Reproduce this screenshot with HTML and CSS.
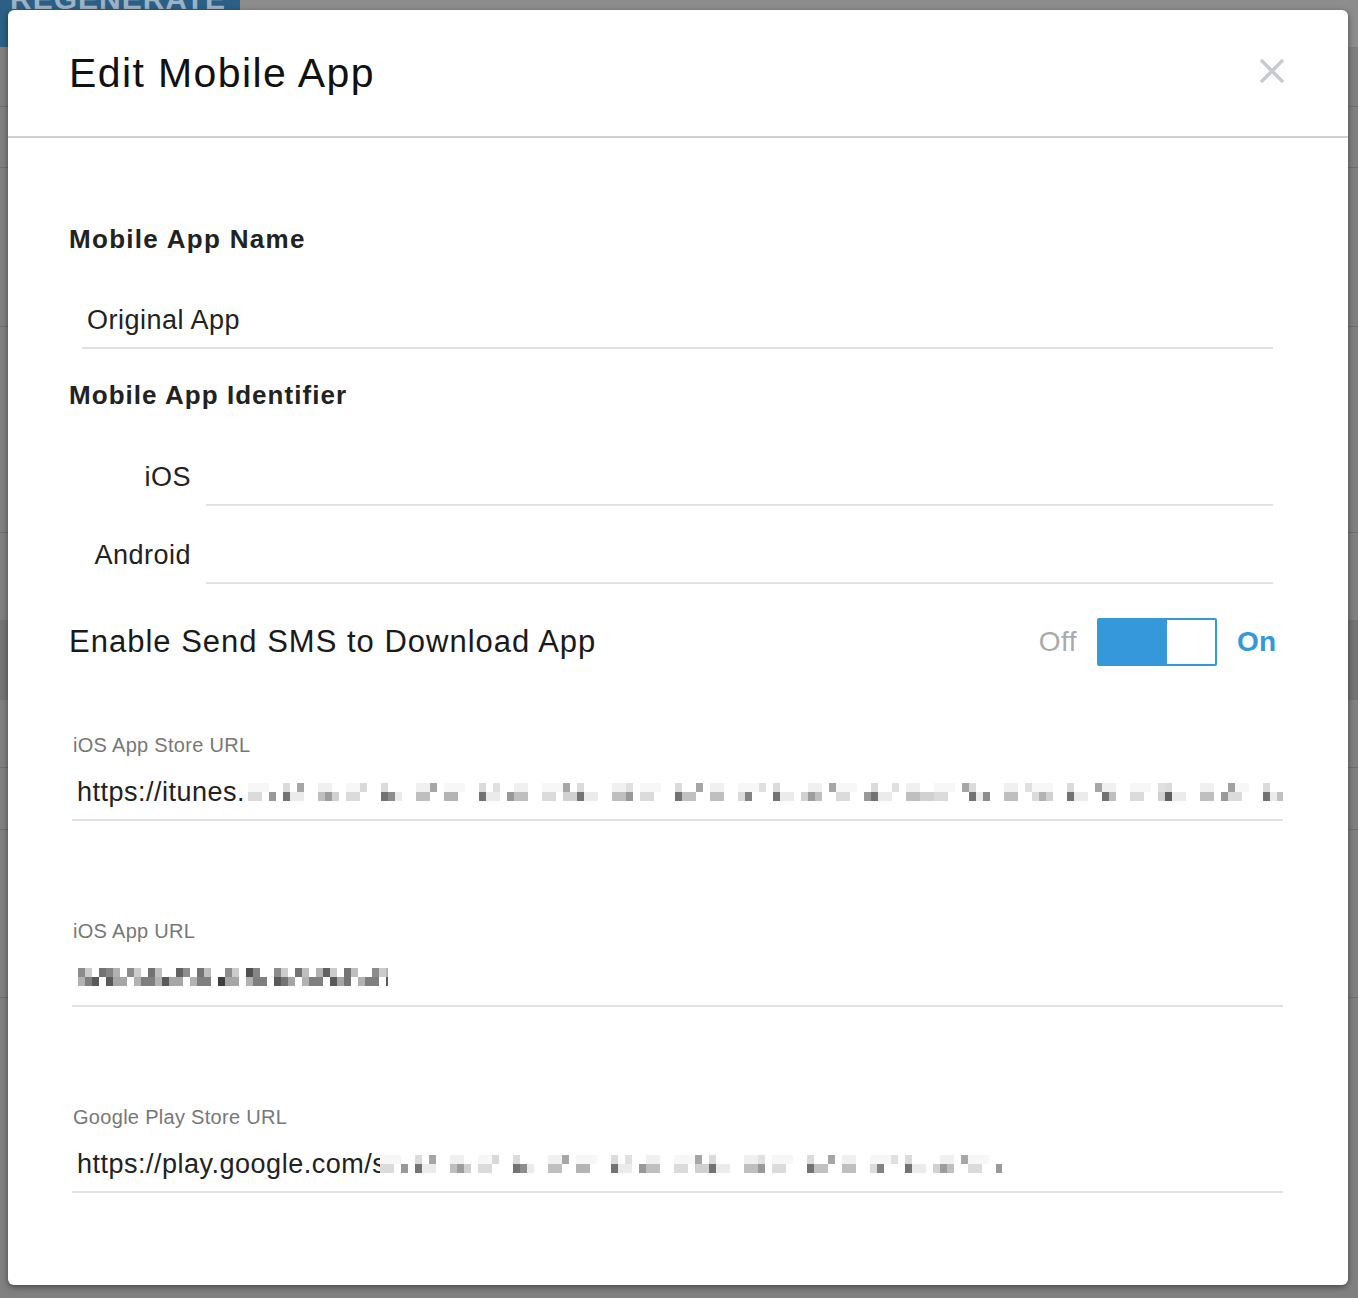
FILE: index.html
```html
<!DOCTYPE html>
<html lang="en">
<head>
    <meta charset="UTF-8">
    <meta name="viewport" content="width=device-width, initial-scale=1.0">
    <title>Edit Mobile App</title>
    <link rel="stylesheet" href="styles.css">
</head>
<body>
    <!-- page behind the dialog, dimmed -->
    <div class="backdrop">
        <div class="bg-top"><div class="bg-btn"><span>REGENERATE</span></div></div>
        <div class="bg-row h60"></div>
        <div class="bg-row h61"></div>
        <div class="bg-row h159"></div>
        <div class="bg-row h206"></div>
        <div class="bg-row h87 no-line"></div>
        <div class="bg-band"></div>
        <div class="bg-row h68"></div>
        <div class="bg-row h62"></div>
        <div class="bg-row h168"></div>
    </div>

    <div class="modal">
        <div class="modal-header">
            <h2 class="modal-title">Edit Mobile App</h2>
            <button class="close-btn" aria-label="Close">
                <svg width="26" height="26" viewBox="0 0 26 26">
                    <path d="M2 2 L24 24 M24 2 L2 24" stroke="#c6cbd0" stroke-width="3.4" fill="none"/>
                </svg>
            </button>
        </div>

        <div class="modal-body">
            <h3 class="field-title">Mobile App Name</h3>
            <div class="name-wrap">
                <input type="text" class="line-input" value="Original App">
            </div>

            <h3 class="field-title id-title">Mobile App Identifier</h3>
            <div class="id-row ios-row">
                <label class="id-label">iOS</label>
                <input type="text" class="line-input">
            </div>
            <div class="id-row android-row">
                <label class="id-label">Android</label>
                <input type="text" class="line-input">
            </div>

            <div class="sms-row">
                <span class="sms-label">Enable Send SMS to Download App</span>
                <span class="switch-off">Off</span>
                <span class="toggle"><span class="toggle-fill"></span></span>
                <span class="switch-on">On</span>
            </div>

            <div class="url-group first">
                <div class="url-label">iOS App Store URL</div>
                <div class="url-value">https://itunes.<span class="mosaic mosaic-light itunes"></span></div>
            </div>

            <div class="url-group">
                <div class="url-label">iOS App URL</div>
                <div class="url-value"><span class="mosaic mosaic-dark app-url"></span></div>
            </div>

            <div class="url-group">
                <div class="url-label">Google Play Store URL</div>
                <div class="url-value">https://play.google.com/s<span class="mosaic mosaic-light play"></span></div>
            </div>
        </div>
    </div>
</body>
</html>
```

FILE: styles.css
```css
body {
    margin: 0;
    height: 1298px;
    overflow: hidden;
    background-color: #808080;
    font-family: "Liberation Sans", Arial, sans-serif;
}

/* dimmed page behind */
.backdrop {
    background-color: #808080;
}
.bg-top {
    height: 47px;
    background-color: #8d8d8d;
}
.bg-btn {
    width: 240px;
    height: 47px;
    background-color: #2c5f86;
    overflow: hidden;
}
.bg-btn span {
    display: block;
    margin-top: -16px;
    padding-left: 10px;
    font-size: 30px;
    line-height: 30px;
    font-weight: bold;
    color: #9db2c5;
    letter-spacing: 1px;
}
.bg-row {
    box-sizing: border-box;
    border-bottom: 1px solid #6f6f6f;
}
.bg-row.no-line {
    border-bottom: none;
}
.h60 { height: 60px; }
.h61 { height: 61px; }
.h159 { height: 159px; }
.h206 { height: 206px; }
.h87 { height: 87px; }
.h68 { height: 68px; }
.h62 { height: 62px; }
.h168 { height: 168px; }
.bg-band {
    height: 80px;
    background-color: #747474;
}

/* dialog */
.modal {
    position: absolute;
    left: 8px;
    top: 10px;
    width: 1340px;
    height: 1275px;
    background-color: #fff;
    border-radius: 6px;
    box-shadow: 0 2px 6px rgba(0, 0, 0, 0.45);
}
.modal-header {
    height: 126px;
    display: flex;
    align-items: center;
    justify-content: space-between;
    padding: 0 63px 0 61px;
    border-bottom: 2px solid #cdd1d5;
}
.modal-title {
    margin: 0;
    font-size: 41px;
    line-height: 48px;
    font-weight: normal;
    color: #111;
    letter-spacing: 1.4px;
}
.close-btn {
    border: none;
    background: none;
    padding: 0;
    margin-bottom: 4px;
    width: 26px;
    height: 26px;
    cursor: pointer;
}
.close-btn svg {
    display: block;
}

.modal-body {
    padding: 86px 65px 0 61px;
}
.field-title {
    margin: 0;
    font-size: 26px;
    line-height: 30px;
    font-weight: bold;
    color: #222;
    letter-spacing: 1.3px;
}
.id-title {
    margin-top: 31px;
    letter-spacing: 1.05px;
}

.line-input {
    display: block;
    width: 100%;
    height: 53px;
    box-sizing: border-box;
    padding: 8px 5px 11px;
    border: none;
    border-bottom: 2px solid #e1e1e1;
    font-family: "Liberation Sans", Arial, sans-serif;
    font-size: 27px;
    line-height: 32px;
    color: #222;
    letter-spacing: 0.5px;
    background: transparent;
    outline: none;
}
.name-wrap {
    margin: 42px 10px 0 13px;
}

.id-row {
    display: flex;
    align-items: flex-start;
    margin-right: 10px;
}
.ios-row {
    margin-top: 43px;
}
.android-row {
    margin-top: 25px;
}
.id-label {
    flex: 0 0 122px;
    padding-top: 8px;
    margin-right: 15px;
    text-align: right;
    font-size: 27px;
    line-height: 32px;
    color: #222;
    letter-spacing: 0.5px;
}
.id-row .line-input {
    flex: 1;
}

.sms-row {
    display: flex;
    align-items: center;
    height: 48px;
    margin: 34px 7px 0 0;
}
.sms-label {
    flex: 1;
    font-size: 31px;
    color: #1a1a1a;
    letter-spacing: 1px;
}
.switch-off {
    font-size: 28px;
    color: #aaa;
    margin-right: 20px;
    letter-spacing: 0.5px;
}
.toggle {
    display: flex;
    width: 120px;
    height: 48px;
    box-sizing: border-box;
    border: 2px solid #3498db;
    border-radius: 2px;
}
.toggle-fill {
    width: 68px;
    background-color: #3498db;
}
.switch-on {
    margin-left: 20px;
    font-size: 28px;
    font-weight: bold;
    color: #3498db;
}

.url-group {
    margin: 98px 0 0 3px;
}
.url-group.first {
    margin-top: 67px;
}
.url-label {
    padding-left: 1px;
    margin-bottom: 11px;
    font-size: 20px;
    line-height: 24px;
    color: #777;
    letter-spacing: 0.3px;
}
.url-value {
    height: 53px;
    box-sizing: border-box;
    padding: 8px 5px 11px;
    border-bottom: 2px solid #e1e1e1;
    font-size: 27px;
    line-height: 32px;
    color: #222;
    letter-spacing: 0.5px;
    white-space: nowrap;
    overflow: hidden;
}

/* pixelated (blurred) parts of the urls */
.mosaic {
    display: inline-block;
    height: 18px;
    vertical-align: baseline;
    background-repeat: no-repeat;
    background-size: 100% 9px;
    background-position: 0 0, 0 0, 0 9px, 0 9px;
}
.mosaic-light {
    background-color: #fff;
    background-image:
        repeating-linear-gradient(90deg, rgba(0,0,0,.03) 0 21px, transparent 21px 35px, rgba(0,0,0,.14) 35px 42px, transparent 42px 70px, rgba(0,0,0,.06) 70px 84px, transparent 84px 98px),
        repeating-linear-gradient(90deg, transparent 0 49px, rgba(0,0,0,.35) 49px 56px, transparent 56px 112px, rgba(0,0,0,.12) 112px 119px, transparent 119px 133px),
        repeating-linear-gradient(90deg, rgba(0,0,0,.14) 0 14px, transparent 14px 35px, rgba(0,0,0,.55) 35px 42px, rgba(0,0,0,.08) 42px 56px, transparent 56px 70px, rgba(0,0,0,.25) 70px 84px, transparent 84px 98px),
        repeating-linear-gradient(90deg, transparent 0 21px, rgba(0,0,0,.4) 21px 28px, transparent 28px 77px, rgba(0,0,0,.18) 77px 91px, transparent 91px 119px);
}
.mosaic-dark {
    background-color: #fff;
    background-image:
        repeating-linear-gradient(90deg, rgba(0,0,0,.45) 0 7px, rgba(0,0,0,.2) 7px 14px, transparent 14px 21px, rgba(0,0,0,.55) 21px 28px, rgba(0,0,0,.25) 28px 35px, transparent 35px 49px),
        repeating-linear-gradient(90deg, transparent 0 28px, rgba(0,0,0,.3) 28px 42px, transparent 42px 70px),
        repeating-linear-gradient(90deg, rgba(0,0,0,.3) 0 7px, rgba(0,0,0,.5) 7px 21px, transparent 21px 28px, rgba(0,0,0,.65) 28px 35px, rgba(0,0,0,.35) 35px 49px, transparent 49px 56px),
        repeating-linear-gradient(90deg, transparent 0 14px, rgba(0,0,0,.3) 14px 21px, transparent 21px 63px);
}
.itunes {
    width: 1040px;
    margin-left: 3px;
}
.app-url {
    width: 310px;
    height: 19px;
    margin-left: 1px;
}
.play {
    width: 622px;
    margin-left: -6px;
}
```
